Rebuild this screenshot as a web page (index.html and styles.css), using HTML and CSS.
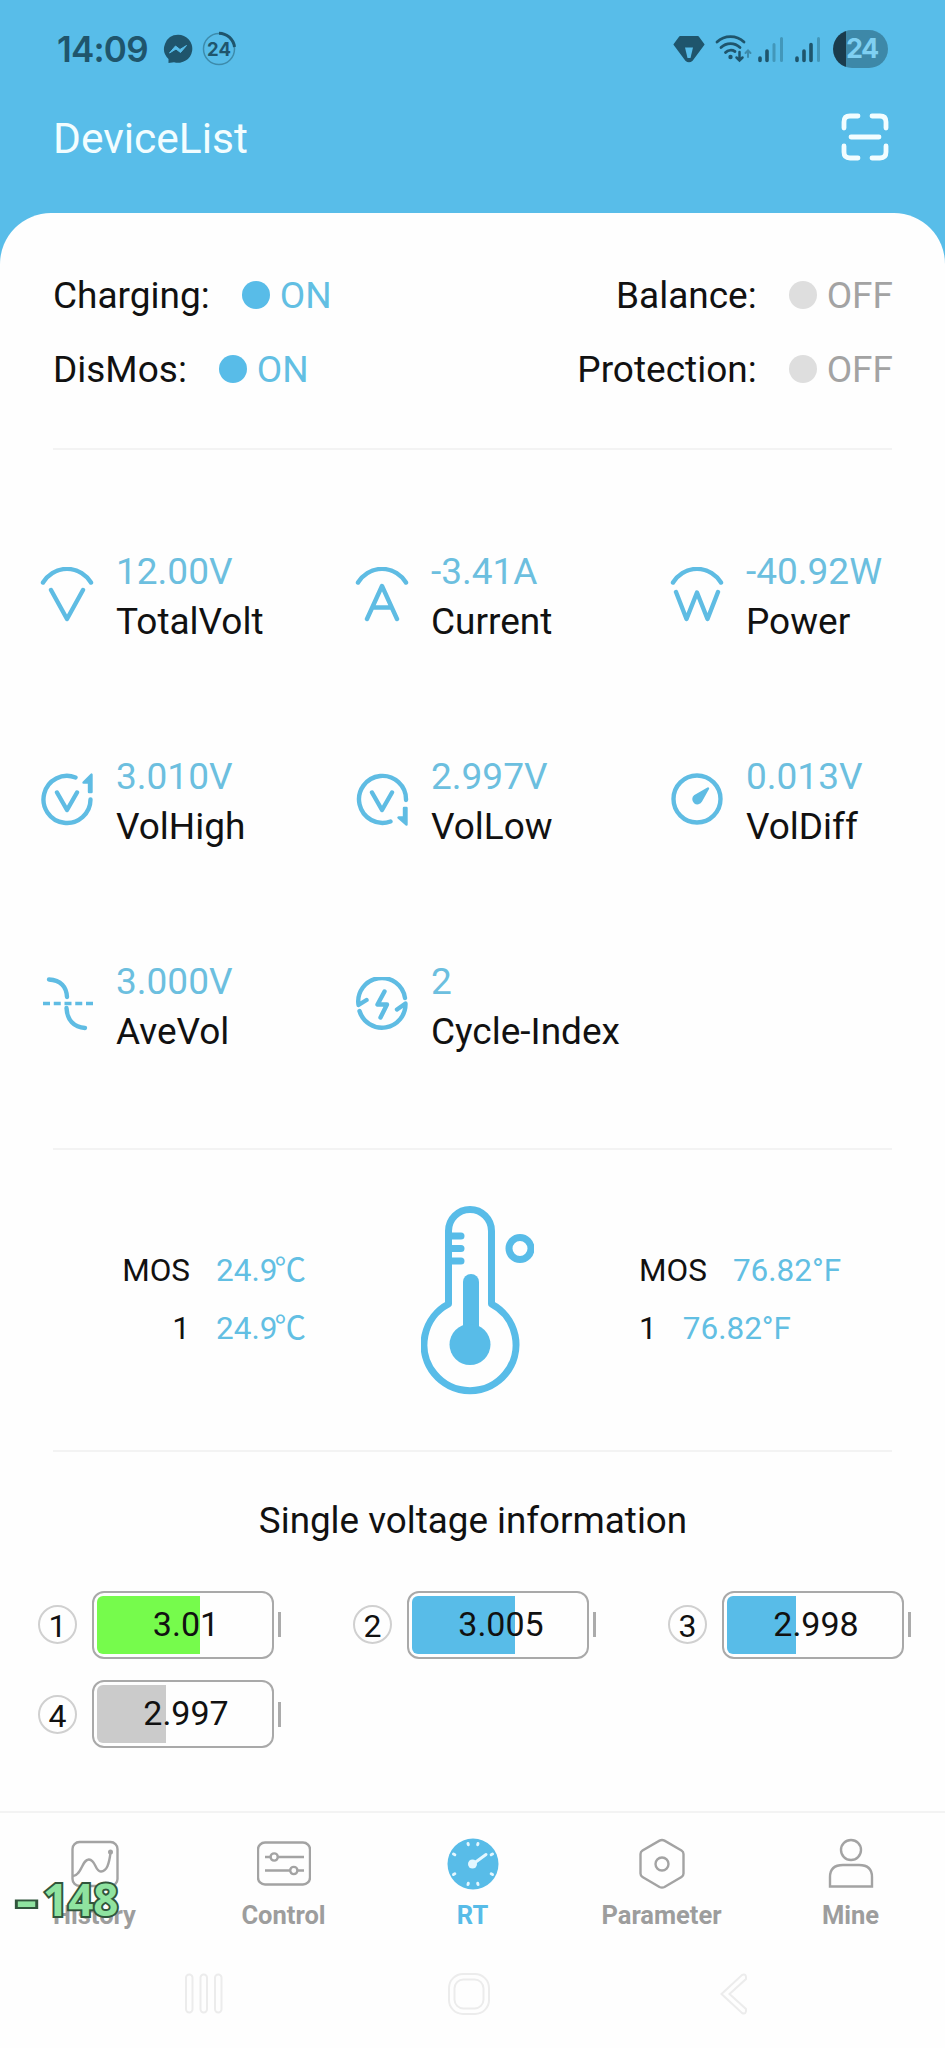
FILE: index.html
```html
<!DOCTYPE html>
<html lang="en">
<head>
    <meta charset="UTF-8">
    <meta name="viewport" content="width=device-width, initial-scale=1.0">
    <title>DeviceList</title>
    <link rel="stylesheet" href="styles.css">
</head>
<body>
    <div class="status-bar">
        <span class="time">14:09</span>
        <svg class="messenger" width="30" height="30" viewBox="0 0 30 30">
            <path fill="#1f556c" d="M15 .8a14.2 14 0 1 1-4 27.4L5.500 29v-4A14 14 0 0 1 15 .8z"/>
            <path fill="#58bde9" stroke="#58bde9" stroke-width="1" stroke-linejoin="round" d="M6.500 19l6-7 4.500 3.500 6.500-4-6 7-4.500-3.500z"/>
        </svg>
        <svg class="ring" width="36" height="36" viewBox="0 0 36 36">
            <circle cx="18" cy="18" r="15.500" fill="none" stroke="#3d8bab" stroke-width="1.500"/>
            <path d="M18 2.200A15.800 15.800 0 0 1 33.500 16" fill="none" stroke="#1f556c" stroke-width="3"/>
            <text x="18" y="24.500" text-anchor="middle" class="ring-text">24</text>
        </svg>
        <svg class="gem" width="32" height="28" viewBox="0 0 32 28">
            <path fill="#1f556c" stroke="#1f556c" stroke-width="2" stroke-linejoin="round" d="M7 2h18l5.500 7.500L19 25q-3 2.500-6 0L1.500 9.500z"/>
            <path fill="#58bde9" d="M12 12.500h8L17.500 23h-3z"/>
        </svg>
        <svg class="wifi" width="38" height="30" viewBox="0 0 38 30">
            <g fill="none" stroke="#1f556c" stroke-width="2.800" stroke-linecap="round">
                <path d="M3 9A19.500 19.500 0 0 1 30 9"/>
                <path d="M7 14.500A13.500 13.500 0 0 1 26 14.500"/>
                <path d="M11.500 19.500A7.500 7.500 0 0 1 21 18.500"/>
                <path stroke-width="2.500" d="M25.500 19v7.500M22.500 24.500l3 3 3-3"/>
                <path stroke="#3d8bab" stroke-width="2" d="M34 24v-6M31.500 20l2.500-2.500 2.500 2.500"/>
            </g>
            <circle cx="16.500" cy="24" r="2.200" fill="#1f556c"/>
        </svg>
        <svg class="signal" width="26" height="27" viewBox="0 0 26 27">
            <path stroke="#1f556c" stroke-width="3.600" stroke-linecap="round" d="M2 22v2.500M9 15v9.500"/>
            <path stroke="#4297ba" stroke-width="3" stroke-linecap="round" d="M16 8.500V24.500M23.500 2.500v22"/>
        </svg>
        <svg class="signal" width="26" height="27" viewBox="0 0 26 27">
            <path stroke="#1f556c" stroke-width="3.600" stroke-linecap="round" d="M2 22v2.500M9 15v9.500M16 8.500v16"/>
            <path stroke="#4297ba" stroke-width="3" stroke-linecap="round" d="M23.500 2.500v22"/>
        </svg>
        <div class="phone-battery">24</div>
    </div>

    <div class="app-bar">
        <h1>DeviceList</h1>
        <svg width="48" height="48" viewBox="0 0 48 48" fill="none" stroke="#f2fdff" stroke-width="4.800" stroke-linecap="round">
            <path d="M3 15V9q0-6 6-6h8M31 3h8q6 0 6 6v6M45 33v6q0 6-6 6h-8M17 45H9q-6 0-6-6v-6M10 24h28"/>
        </svg>
    </div>

    <div class="sheet">
        <div class="switches">
            <div class="switch-row">
                <span>Charging:</span><i class="dot"></i><span class="on">ON</span>
                <span class="right">Balance:</span><i class="dot gray"></i><span class="off">OFF</span>
            </div>
            <div class="switch-row">
                <span>DisMos:</span><i class="dot"></i><span class="on">ON</span>
                <span class="right">Protection:</span><i class="dot gray"></i><span class="off">OFF</span>
            </div>
        </div>

        <div class="metrics">
            <div class="metric">
                <svg viewBox="0 0 54 60">
                    <path d="M3 15.500A28 28 0 0 1 51 15.500M11 23L27 52L43 23"/>
                </svg>
                <div><p class="value">12.00V</p><p>TotalVolt</p></div>
            </div>
            <div class="metric">
                <svg viewBox="0 0 54 60">
                    <path d="M3 15.500A28 28 0 0 1 51 15.500M12 52L27 19L42 52M17.500 40.500H36.500"/>
                </svg>
                <div><p class="value">-3.41A</p><p>Current</p></div>
            </div>
            <div class="metric">
                <svg viewBox="0 0 54 60">
                    <path d="M3 15.500A28 28 0 0 1 51 15.500M6 25L16.500 52L27 25.500L37.500 52L48 25"/>
                </svg>
                <div><p class="value">-40.92W</p><p>Power</p></div>
            </div>
            <div class="metric">
                <svg viewBox="0 0 54 60">
                    <path d="M35.500 5.500A23.500 23.500 0 1 0 50.500 27.500M17 20.500L27 38L37 20.500"/>
                    <path class="solid" d="M43.500 10.500L51.500 2.500V20H49V10.500z"/>
                </svg>
                <div><p class="value">3.010V</p><p>VolHigh</p></div>
            </div>
            <div class="metric">
                <svg viewBox="0 0 54 60">
                    <path d="M51 28A23.500 23.500 0 1 0 35.500 49.500M17 20.500L27 38L37 20.500"/>
                    <path class="solid" d="M51.500 36V52.500L43.500 45.500H49V36z"/>
                </svg>
                <div><p class="value">2.997V</p><p>VolLow</p></div>
            </div>
            <div class="metric">
                <svg viewBox="0 0 54 60">
                    <circle cx="27" cy="27" r="23.500"/>
                    <path class="solid" d="M38 16.500L31 29A4 4 0 1 1 25 24z"/>
                </svg>
                <div><p class="value">0.013V</p><p>VolDiff</p></div>
            </div>
            <div class="metric">
                <svg viewBox="0 0 54 60">
                    <path d="M9 2.500C21 3 26.500 10 27 20M26.500 31C27 43 34 50.500 45 51"/>
                    <path class="dashes" d="M3 26.500H53"/>
                </svg>
                <div><p class="value">3.000V</p><p>AveVol</p></div>
            </div>
            <div class="metric">
                <svg viewBox="0 0 54 60">
                    <path d="M50 21A23.500 23.500 0 0 0 3.500 28L11.500 23M4.500 34A23.500 23.500 0 0 0 50.500 26.500L42 32.500"/>
                    <path d="M29.500 14.500L22.500 27.500H32L25.500 40.500"/>
                </svg>
                <div><p class="value">2</p><p>Cycle-Index</p></div>
            </div>
        </div>

        <div class="temperature">
            <div class="temps celsius">
                <p>MOS<span>24.9<i>℃</i></span></p>
                <p>1<span>24.9<i>℃</i></span></p>
            </div>
            <svg class="thermometer" width="113" height="190" viewBox="0 0 113 190">
                <g fill="none" stroke="#58bce8" stroke-width="7">
                    <path stroke-linejoin="round" d="M27.500 99V26a21.500 21.500 0 0 1 43 0V99A46 46 0 1 1 27.500 99z"/>
                    <path stroke-linecap="round" d="M28 31H40M28 43.500H40M28 56H40"/>
                    <circle cx="99" cy="43.500" r="11"/>
                    <path stroke-width="16" stroke-linecap="round" d="M50 77V135"/>
                </g>
                <circle cx="49" cy="139.500" r="20.500" fill="#58bce8"/>
            </svg>
            <div class="temps">
                <p>MOS<span>76.82°F</span></p>
                <p>1<span>76.82°F</span></p>
            </div>
        </div>

        <h2>Single voltage information</h2>
        <div class="cells">
            <div class="cell">
                <span class="num">1</span>
                <div class="battery"><div class="fill green" style="width: 60%"></div><span>3.01</span></div>
                <i class="tip"></i>
            </div>
            <div class="cell">
                <span class="num">2</span>
                <div class="battery"><div class="fill" style="width: 60%"></div><span>3.005</span></div>
                <i class="tip"></i>
            </div>
            <div class="cell">
                <span class="num">3</span>
                <div class="battery"><div class="fill" style="width: 40%"></div><span>2.998</span></div>
                <i class="tip"></i>
            </div>
            <div class="cell">
                <span class="num">4</span>
                <div class="battery"><div class="fill low" style="width: 40%"></div><span>2.997</span></div>
                <i class="tip"></i>
            </div>
        </div>

        <div class="tab-bar">
            <div class="tab">
                <svg viewBox="0 0 54 54">
                    <rect x="4.500" y="5" width="45" height="44" rx="7"/>
                    <path d="M5 39C14 38 14 22 21 22.500S27 35 33 34.500S41 27 42.500 16"/>
                    <circle cx="42.500" cy="15" r="1.300"/>
                </svg>
                <span>History</span>
            </div>
            <div class="tab">
                <svg viewBox="0 0 54 54">
                    <rect x="1" y="5.500" width="52" height="42" rx="7"/>
                    <path d="M8 20H13.500M21 20H47M8 33.500H33M40.500 33.500H47"/>
                    <circle cx="17.200" cy="20" r="3.600"/>
                    <circle cx="36.800" cy="33.500" r="3.600"/>
                </svg>
                <span>Control</span>
            </div>
            <div class="tab active">
                <svg viewBox="0 0 54 54">
                    <circle class="face" cx="27" cy="27" r="25.500"/>
                    <path class="ticks" d="M22 6.500l.3 1.200M32 6.500l-.3 1.200M7.500 17l1.300.7M45.200 17.700l1.300-.7M7.500 37.500l1.300-.7M45.200 36.800l1.300.7M22 47.500l.3-1.200M32 47.500l-.3-1.200"/>
                    <path class="hand" d="M27 27L40 17.500"/>
                    <circle class="hub" cx="26.500" cy="27" r="4.500"/>
                </svg>
                <span>RT</span>
            </div>
            <div class="tab">
                <svg viewBox="0 0 54 54">
                    <path d="M24.500 3.600q2.500-1.200 5 0L46.500 13.500q2 1.200 2 3.500V36.500q0 2.300-2 3.500L29.500 50q-2.500 1.200-5 0L7.500 40q-2-1.200-2-3.500V17q0-2.300 2-3.500z"/>
                    <circle cx="27" cy="27" r="6.500"/>
                </svg>
                <span>Parameter</span>
            </div>
            <div class="tab">
                <svg viewBox="0 0 54 54">
                    <circle cx="27" cy="13" r="10"/>
                    <path d="M6 49.500V40Q6 28 19 28H35Q48 28 48 40V49.500z"/>
                </svg>
                <span>Mine</span>
            </div>
            <div class="overlay"><span>-</span>148</div>
        </div>

        <div class="nav-bar">
            <svg width="38" height="42" viewBox="0 0 38 42">
                <rect x="1" y="1.500" width="6.500" height="38" rx="3.200"/>
                <rect x="15.500" y="1.500" width="6.500" height="38" rx="3.200"/>
                <rect x="30" y="1.500" width="6.500" height="38" rx="3.200"/>
            </svg>
            <svg width="42" height="42" viewBox="0 0 42 42">
                <rect x="1" y="1" width="40" height="40" rx="14"/>
                <rect x="6.500" y="6.500" width="29" height="29" rx="9"/>
            </svg>
            <svg width="28" height="42" viewBox="0 0 28 42">
                <path d="M22 2Q26.500 0 26 6L9.500 21L26 36Q26.500 42 22 40L1.500 21z"/>
            </svg>
        </div>
    </div>
</body>
</html>
```

FILE: styles.css
```css
* {
    box-sizing: border-box;
}
body {
    font-family: Roboto, "Noto Sans CJK SC", sans-serif;
    margin: 0;
    width: 945px;
    height: 2048px;
    overflow: hidden;
    background: #58bde9;
    color: #111;
    font-size: 37px;
}
p, h1, h2 {
    margin: 0;
    font-weight: 400;
}

/* phone status bar */
.status-bar {
    display: flex;
    align-items: center;
    height: 98px;
    padding: 0 57px;
    color: #1f556c;
}
.time {
    width: 106px;
    font-family: Inter, sans-serif;
    font-size: 35px;
    font-weight: 600;
    letter-spacing: -0.8px;
}
.ring {
    margin-left: 8px;
}
.ring-text {
    font-family: Inter, sans-serif;
    font-size: 18.5px;
    font-weight: 700;
    fill: #1f556c;
}
.gem {
    margin-left: auto;
}
.wifi {
    margin-left: 9px;
    margin-top: -2px;
}
.signal {
    margin-left: 6px;
}
.signal + .signal {
    margin-left: 11px;
}
.phone-battery {
    width: 55px;
    height: 38px;
    margin-left: 12px;
    padding-left: 13px;
    border-radius: 19px;
    background: linear-gradient(90deg, #1a3c4d 13px, #3d88a8 13px);
    color: #7fd0f2;
    font: 700 27px/38px Inter, sans-serif;
    letter-spacing: -1.5px;
}

.app-bar {
    display: flex;
    align-items: center;
    justify-content: space-between;
    height: 78px;
    margin-bottom: 37px;
    padding: 0 56px 0 53px;
}
.app-bar h1 {
    padding-top: 2px;
    color: #f2fdff;
    font-size: 42.5px;
}

.sheet {
    height: 1835px;
    border-radius: 51px 51px 0 0;
    background: #fefefe;
}

.switches {
    height: 237px;
    margin: 0 53px;
    padding-top: 45px;
    border-bottom: 2px solid #f3f3f3;
}
.switch-row {
    display: flex;
    align-items: center;
    height: 74px;
}
.dot {
    width: 28px;
    height: 28px;
    margin: 0 10px 0 32px;
    border-radius: 50%;
    background: #58bce8;
}
.gray {
    background: #dedede;
}
.on {
    color: #62bfe3;
}
.off {
    margin-right: -1px;
    color: #a3a3a3;
}
.right {
    margin-left: auto;
}

.metrics {
    display: grid;
    grid-template-columns: repeat(3, 315px);
    grid-auto-rows: 205px;
    padding-top: 44px;
    height: 698px;
}
.metric {
    display: flex;
    align-items: center;
    padding-left: 40px;
    line-height: 50px;
    white-space: nowrap;
}
.metric svg {
    width: 54px;
    height: 60px;
    margin-right: 22px;
    fill: none;
    stroke: #5fbce3;
    stroke-width: 4.4;
    stroke-linecap: round;
    stroke-linejoin: round;
}
.metric .solid {
    fill: #5fbce3;
    stroke-width: 2.4;
}
.metric .dashes {
    stroke-width: 3.6;
    stroke-linecap: butt;
    stroke-dasharray: 7 3.75;
}
.value {
    color: #6cbfdf;
}

.temperature {
    display: flex;
    align-items: center;
    height: 304px;
    margin: 0 53px;
    border: solid #f3f3f3;
    border-width: 2px 0;
}
.temps {
    font-size: 31.5px;
    line-height: 58px;
}
.temps span {
    margin-left: 26px;
    color: #62bfe3;
}
.temps i {
    margin-left: -3px;
    font-style: normal;
}
.celsius {
    width: 253px;
    text-align: right;
}
.thermometer {
    margin: 0 105px 0 115px;
}

h2 {
    margin-top: 43px;
    padding-left: 1px;
    text-align: center;
    font-size: 36.8px;
    line-height: 52px;
}
.cells {
    display: grid;
    grid-template-columns: repeat(3, 315px);
    grid-auto-rows: 89.4px;
    height: 264px;
    padding-top: 33px;
}
.cell {
    display: flex;
    align-items: center;
    padding-left: 38px;
}
.num {
    width: 39px;
    height: 39px;
    border: 2px solid #d0d0d0;
    border-radius: 50%;
    text-align: center;
    font-size: 32px;
    line-height: 39px;
}
.battery {
    position: relative;
    width: 182px;
    height: 68px;
    margin-left: 15px;
    padding: 3px;
    border: 2.5px solid #a9a9a9;
    border-radius: 12px;
    font-size: 34px;
}
.fill {
    height: 58px;
    border-radius: 6px 0 0 6px;
    background: #58bce8;
}
.green {
    background: #76fb4c;
}
.low {
    background: #cbcbcb;
}
.battery span {
    position: absolute;
    inset: 0;
    padding-left: 6px;
    text-align: center;
    line-height: 63px;
}
.tip {
    width: 3px;
    height: 25px;
    margin-left: 4px;
    background: #ababab;
}

.tab-bar {
    position: relative;
    display: flex;
    height: 140px;
    border-top: 2px solid #f3f3f3;
}
.tab {
    display: flex;
    flex-direction: column;
    align-items: center;
    width: 189px;
    padding-top: 24px;
    color: #9d9d9d;
    font-size: 25.5px;
    font-weight: 700;
    line-height: 30px;
}
.tab svg {
    width: 54px;
    height: 54px;
    margin-bottom: 9px;
    fill: none;
    stroke: #a3a3a3;
    stroke-width: 2.4;
}
.active {
    color: #58bce8;
}
.active .face {
    fill: #58bce8;
    stroke: none;
}
.active .ticks, .active .hand {
    stroke: #e4f7ff;
    stroke-width: 3;
    stroke-linecap: round;
}
.active .hub {
    fill: #e4f7ff;
    stroke: none;
}
/* current draw badge floating over the first tab */
.overlay {
    position: absolute;
    left: 16px;
    top: 56px;
    font: 700 44px/60px "Noto Sans", sans-serif;
    color: #8fe3a0;
    -webkit-text-stroke: 4px #31553c;
    paint-order: stroke fill;
}
.overlay span {
    display: inline-block;
    width: 27px;
    transform: scaleX(1.5);
    transform-origin: left;
}

.nav-bar {
    display: flex;
    align-items: center;
    height: 86px;
    padding-left: 185px;
}
.nav-bar svg {
    fill: none;
    stroke: #ececec;
    stroke-width: 2;
}
.nav-bar svg + svg {
    margin-left: 225px;
}
.nav-bar svg:last-child {
    margin-left: 230px;
}
```
